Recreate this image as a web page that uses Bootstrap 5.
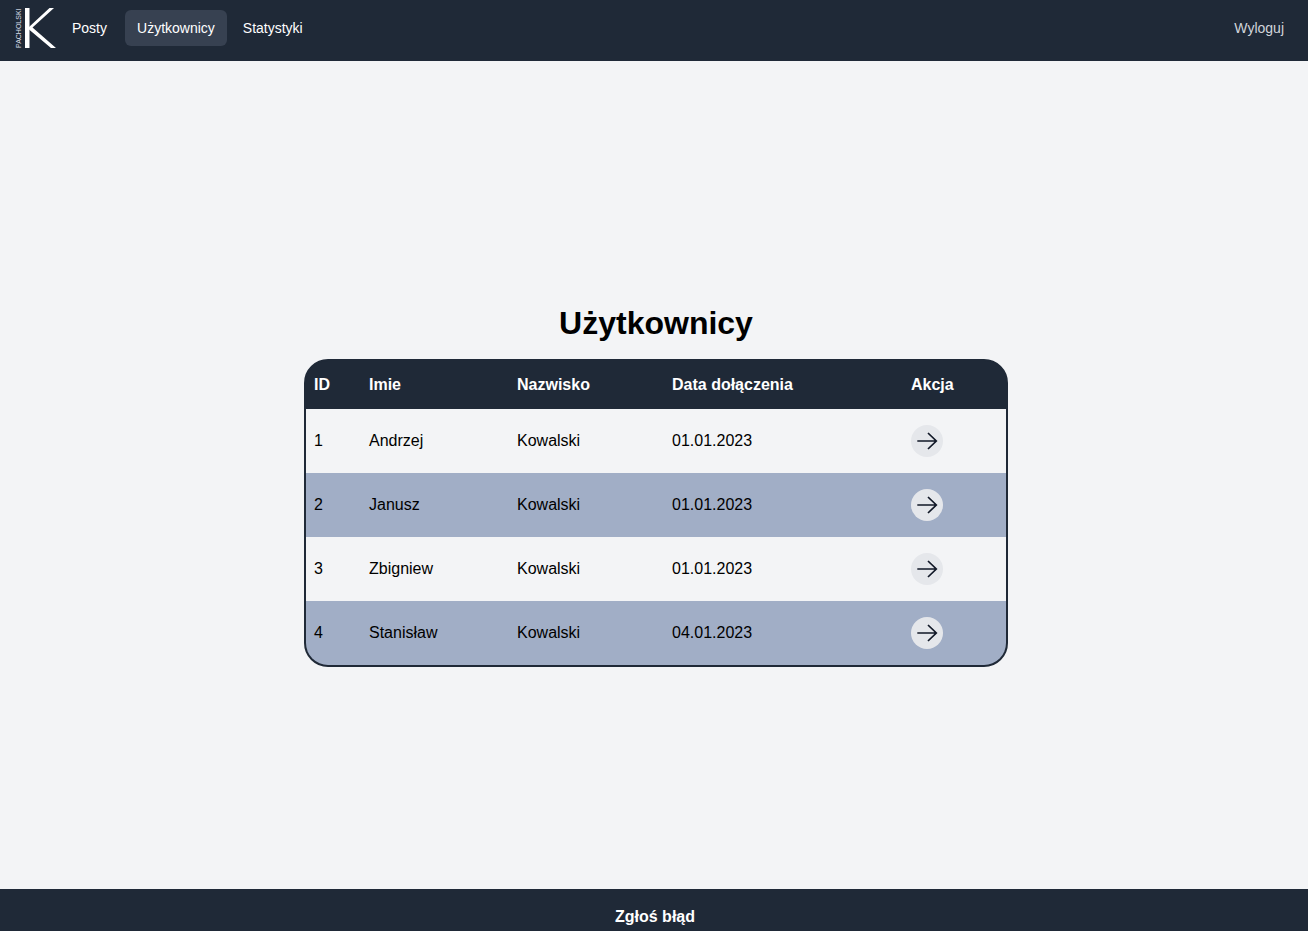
<!DOCTYPE html>
<html lang="pl">
  <head>
    <meta charset="UTF-8" />
    <meta name="viewport" content="width=device-width, initial-scale=1.0" />
    <title>Użytkownicy</title>
    <link
      rel="stylesheet"
      href="https://cdn.jsdelivr.net/npm/bootstrap@5.3.0/dist/css/bootstrap.min.css"
    />
    <style>
      html, body { height: 100%; }
      body {
        font-family: "Liberation Sans", Arial, sans-serif;
        background: #f3f4f6;
        color: #000;
      }
      .top-bar { background: #1f2937; height: 61px; padding: 0 12px 6px 15px; }
      .brand-box { height: 40px; margin: 1px 3px 0 0; }
      .brand-name {
        writing-mode: vertical-rl;
        transform: rotate(180deg);
        font-size: 7px;
        line-height: 8px;
        width: 8px;
        height: 40px;
        margin-right: 2px;
        color: #d8dee8;
        white-space: nowrap;
      }
      .brand-k { width: 32px; height: 40px; display: block; }
      .menu-link {
        display: block;
        color: #fff;
        font-size: 14px;
        line-height: 20px;
        padding: 8px 12px;
        border-radius: 6px;
        text-decoration: none;
      }
      .menu-link.current { background: #374151; margin: 0 4px 0 6px; }
      .logout-link { color: #d1d5db; }
      .page-main { flex: 1 1 auto; padding: 22px 0 0 4px; }
      .page-title { font-size: 32px; line-height: 36px; font-weight: 700; margin: 0 0 18px; text-align: center; width: 704px; }
      .users-wrap {
        width: 704px;
        border: 2px solid #1f2937;
        border-radius: 24px;
        overflow: hidden;
        background: #1f2937;
      }
      .users-table { width: 100%; margin: 0; border-collapse: collapse; table-layout: fixed; font-size: 16px; line-height: 24px; }
      .users-table th {
        color: #fff;
        font-weight: 700;
        padding: 0 8px;
        height: 48px;
        text-align: left;
      }
      .users-table td { padding: 0 8px; height: 64px; vertical-align: middle; background: #f3f4f6; }
      .users-table tbody tr:nth-child(even) td { background: #a1aec6; }
      .col-id { width: 55px; }
      .col-first { width: 148px; }
      .col-last { width: 155px; }
      .col-date { width: 239px; }
      .go-btn {
        display: flex;
        align-items: center;
        justify-content: center;
        width: 32px;
        height: 32px;
        border-radius: 50%;
        background: #e5e7eb;
      }
      .go-btn svg { width: 24px; height: 24px; display: block; }
      .page-footer { background: #1f2937; height: 42px; color: #fff; font-weight: 700; font-size: 16px; line-height: 24px; padding: 16px 0 0 2px; text-align: center; }
    </style>
  </head>
  <body class="d-flex flex-column">
    <nav class="top-bar d-flex align-items-center justify-content-between">
      <div class="d-flex align-items-center">
        <div class="brand-box d-flex">
          <span class="brand-name">PACHOLSKI</span>
          <svg class="brand-k" viewBox="0 0 32 40">
            <rect x="0" y="0" width="4.5" height="40" fill="#fff" />
            <path d="M4 19 L24.5 0 L29 0 L7.5 19.5 L31 40 L26 40 L4 21.5 Z" fill="#fff" />
          </svg>
        </div>
        <div class="d-flex">
          <a class="menu-link" href="#">Posty</a>
          <a class="menu-link current" href="#">Użytkownicy</a>
          <a class="menu-link" href="#">Statystyki</a>
        </div>
      </div>
      <a class="menu-link logout-link" href="#">Wyloguj</a>
    </nav>

    <main class="page-main d-flex flex-column align-items-center justify-content-center">
      <h1 class="page-title">Użytkownicy</h1>
      <div class="users-wrap">
        <table class="users-table">
          <thead>
            <tr>
              <th class="col-id">ID</th>
              <th class="col-first">Imie</th>
              <th class="col-last">Nazwisko</th>
              <th class="col-date">Data dołączenia</th>
              <th>Akcja</th>
            </tr>
          </thead>
          <tbody id="rows"></tbody>
        </table>
      </div>
    </main>

    <footer class="page-footer">Zgłoś błąd</footer>

    <script>
      const users = [
        [1, "Andrzej", "Kowalski", "01.01.2023"],
        [2, "Janusz", "Kowalski", "01.01.2023"],
        [3, "Zbigniew", "Kowalski", "01.01.2023"],
        [4, "Stanisław", "Kowalski", "04.01.2023"],
      ];
      const arrow =
        '<svg viewBox="0 0 24 24" fill="none" stroke="#111827" stroke-width="1.7"><path d="M2.3 12h19M13 4l8.3 8-8.3 8"/></svg>';
      let html = "";
      for (let u of users) {
        html += `<tr><td>${u[0]}</td><td>${u[1]}</td><td>${u[2]}</td><td>${u[3]}</td>
          <td><a class="go-btn" href="#">${arrow}</a></td></tr>`;
      }
      document.getElementById("rows").innerHTML = html;
    </script>
    <script src="https://cdn.jsdelivr.net/npm/bootstrap@5.3.0/dist/js/bootstrap.bundle.min.js"></script>
  </body>
</html>
